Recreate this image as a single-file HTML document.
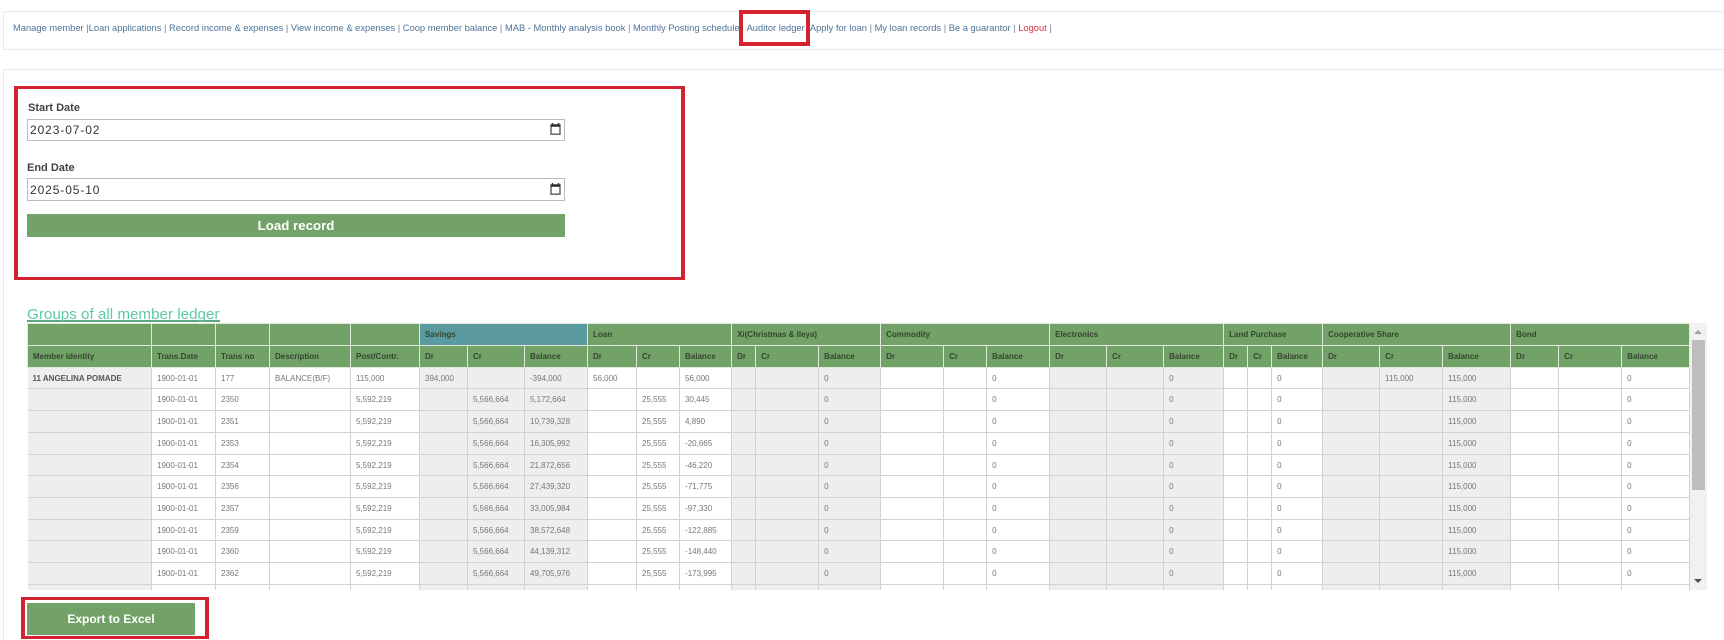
<!DOCTYPE html>
<html lang="en">
<head>
<meta charset="utf-8">
<title>Auditor ledger</title>
<style>
html,body{margin:0;padding:0;background:#fff;width:1724px;height:640px;overflow:hidden;font-family:"Liberation Sans",Arial,sans-serif}
body{position:relative}
.abs{position:absolute;box-sizing:border-box}
.panel1{left:3px;top:11px;width:1721px;height:39px;border:1px solid #eaeaea;border-right:0}
.panel2{left:3px;top:69px;width:1721px;height:571px;border:1px solid #eaeaea;border-right:0;border-bottom:0}
.nav{left:13px;top:22px;font-size:9.35px;line-height:12px;color:#6d7f96;white-space:pre}
.nav a{color:#4f7299;text-decoration:none}
.nav a.out{color:#d8353c}
.red{border-style:solid;border-color:#d2232f;border-width:3px 4px}
label{position:absolute;left:28px;font-size:11px;font-weight:bold;color:#444;line-height:14px}
input{position:absolute;left:27px;width:538px;height:22px;box-sizing:border-box;border:1px solid #bbb;background:#fff;padding:0 2px;margin:0;font-family:"Liberation Sans",sans-serif;font-size:12px;letter-spacing:.9px;color:#333;border-radius:0;outline:0}
.btn{background:#72a268;color:#fff;font-weight:bold;text-align:center}
.h{left:27px;top:304px;width:193px;height:18px;font-size:15.2px;line-height:21px;color:#5cc9a7;border-bottom:2px solid #62a681;white-space:nowrap}
.wrap{left:27px;top:323px;width:1663px;height:267px;overflow:hidden}
table{border-collapse:collapse;table-layout:fixed;width:1662px;font-size:8px;color:#777}
td,th{border:1px solid #d2d2d2;padding:0 0 0 5px;overflow:hidden;white-space:nowrap;text-align:left;font-weight:normal}
td:first-child{border-left:0}
th{background:#72a268;color:#35452f;font-weight:bold;border-color:#dfe9dc}
th.t{background:#5b9aa0}
col.g{background:#eee}
td.b{font-weight:bold;color:#555}
.sb{left:1690px;top:323px;width:17px;height:267px;background:#f1f1f1}
.th{left:1692px;top:340px;width:13px;height:150px;background:#bdbdbd}
.up{left:1694px;top:330px;width:0;height:0;border-left:4px solid transparent;border-right:4px solid transparent;border-bottom:4px solid #a3a3a3}
.dn{left:1694px;top:579px;width:0;height:0;border-left:4px solid transparent;border-right:4px solid transparent;border-top:4px solid #505050}
svg.cal{position:absolute;left:550px;width:11px;height:12px}
</style>
</head>
<body>
<div class="abs panel1"></div>
<div class="abs panel2"></div>
<div class="abs nav"><a href="#">Manage member</a> |<a href="#">Loan applications</a> | <a href="#">Record income &amp; expenses</a> | <a href="#">View income &amp; expenses</a> | <a href="#">Coop member balance</a> | <a href="#">MAB - Monthly analysis book</a> | <a href="#">Monthly Posting schedule</a>| <a href="#" style="margin-left:2px;margin-right:-2px">Auditor ledger</a> | <a href="#">Apply for loan</a> | <a href="#">My loan records</a> | <a href="#">Be a guarantor</a> | <a class="out" href="#">Logout</a> |</div>
<div class="abs red" style="left:739px;top:10px;width:71px;height:36px;border-width:4px"></div>

<div class="abs red" style="left:14px;top:86px;width:671px;height:194px"></div>
<label style="top:101px">Start Date</label>
<input type="text" value="2023-07-02" style="top:119px">
<svg class="cal" style="top:123px" viewBox="0 0 11 12"><path d="M2.5 0v2M8.5 0v2" stroke="#333" stroke-width="1.4"/><rect x="1" y="2" width="9" height="9.2" fill="#fff" stroke="#666" stroke-width="1.5"/><rect x="1" y="1.5" width="9" height="2.2" fill="#222"/></svg>
<label style="left:27px;top:161px">End Date</label>
<input type="text" value="2025-05-10" style="top:178px;height:23px">
<svg class="cal" style="top:183px" viewBox="0 0 11 12"><path d="M2.5 0v2M8.5 0v2" stroke="#333" stroke-width="1.4"/><rect x="1" y="2" width="9" height="9.2" fill="#fff" stroke="#666" stroke-width="1.5"/><rect x="1" y="1.5" width="9" height="2.2" fill="#222"/></svg>
<div class="abs btn" style="left:27px;top:214px;width:538px;height:23px;font-size:13.3px;line-height:23px">Load record</div>

<div class="abs h">Groups of all member ledger</div>

<div class="abs wrap">
<table>
<colgroup>
<col class="g" style="width:124px"><col style="width:64px"><col style="width:54px"><col style="width:81px"><col style="width:69px">
<col class="g" style="width:48px"><col class="g" style="width:57px"><col class="g" style="width:63px">
<col style="width:49px"><col style="width:43px"><col style="width:52px">
<col class="g" style="width:24px"><col class="g" style="width:63px"><col class="g" style="width:62px">
<col style="width:63px"><col style="width:43px"><col style="width:63px">
<col class="g" style="width:57px"><col class="g" style="width:57px"><col class="g" style="width:60px">
<col style="width:24px"><col style="width:24px"><col style="width:51px">
<col class="g" style="width:57px"><col class="g" style="width:63px"><col class="g" style="width:68px">
<col style="width:48px"><col style="width:63px"><col style="width:68px">
</colgroup>
<tr style="height:22px"><th></th><th></th><th></th><th></th><th></th><th class="t" colspan="3">Savings</th><th colspan="3">Loan</th><th colspan="3">Xi(Christmas &amp; Ileya)</th><th colspan="3">Commodity</th><th colspan="3">Electronics</th><th colspan="3">Land Purchase</th><th colspan="3">Cooperative Share</th><th colspan="3">Bond</th></tr>
<tr style="height:22px"><th>Member Identity</th><th>Trans.Date</th><th>Trans no</th><th>Description</th><th>Post/Contr.</th><th>Dr</th><th>Cr</th><th>Balance</th><th>Dr</th><th>Cr</th><th>Balance</th><th>Dr</th><th>Cr</th><th>Balance</th><th>Dr</th><th>Cr</th><th>Balance</th><th>Dr</th><th>Cr</th><th>Balance</th><th>Dr</th><th>Cr</th><th>Balance</th><th>Dr</th><th>Cr</th><th>Balance</th><th>Dr</th><th>Cr</th><th>Balance</th></tr>
<tr style="height:21px"><td class="b">11 ANGELINA POMADE</td><td>1900-01-01</td><td>177</td><td>BALANCE(B/F)</td><td>115,000</td><td>394,000</td><td></td><td>-394,000</td><td>56,000</td><td></td><td>56,000</td><td></td><td></td><td>0</td><td></td><td></td><td>0</td><td></td><td></td><td>0</td><td></td><td></td><td>0</td><td></td><td>115,000</td><td>115,000</td><td></td><td></td><td>0</td></tr>
<tr style="height:22px"><td></td><td>1900-01-01</td><td>2350</td><td></td><td>5,592,219</td><td></td><td>5,566,664</td><td>5,172,664</td><td></td><td>25,555</td><td>30,445</td><td></td><td></td><td>0</td><td></td><td></td><td>0</td><td></td><td></td><td>0</td><td></td><td></td><td>0</td><td></td><td></td><td>115,000</td><td></td><td></td><td>0</td></tr>
<tr style="height:22px"><td></td><td>1900-01-01</td><td>2351</td><td></td><td>5,592,219</td><td></td><td>5,566,664</td><td>10,739,328</td><td></td><td>25,555</td><td>4,890</td><td></td><td></td><td>0</td><td></td><td></td><td>0</td><td></td><td></td><td>0</td><td></td><td></td><td>0</td><td></td><td></td><td>115,000</td><td></td><td></td><td>0</td></tr>
<tr style="height:22px"><td></td><td>1900-01-01</td><td>2353</td><td></td><td>5,592,219</td><td></td><td>5,566,664</td><td>16,305,992</td><td></td><td>25,555</td><td>-20,665</td><td></td><td></td><td>0</td><td></td><td></td><td>0</td><td></td><td></td><td>0</td><td></td><td></td><td>0</td><td></td><td></td><td>115,000</td><td></td><td></td><td>0</td></tr>
<tr style="height:21px"><td></td><td>1900-01-01</td><td>2354</td><td></td><td>5,592,219</td><td></td><td>5,566,664</td><td>21,872,656</td><td></td><td>25,555</td><td>-46,220</td><td></td><td></td><td>0</td><td></td><td></td><td>0</td><td></td><td></td><td>0</td><td></td><td></td><td>0</td><td></td><td></td><td>115,000</td><td></td><td></td><td>0</td></tr>
<tr style="height:22px"><td></td><td>1900-01-01</td><td>2356</td><td></td><td>5,592,219</td><td></td><td>5,566,664</td><td>27,439,320</td><td></td><td>25,555</td><td>-71,775</td><td></td><td></td><td>0</td><td></td><td></td><td>0</td><td></td><td></td><td>0</td><td></td><td></td><td>0</td><td></td><td></td><td>115,000</td><td></td><td></td><td>0</td></tr>
<tr style="height:22px"><td></td><td>1900-01-01</td><td>2357</td><td></td><td>5,592,219</td><td></td><td>5,566,664</td><td>33,005,984</td><td></td><td>25,555</td><td>-97,330</td><td></td><td></td><td>0</td><td></td><td></td><td>0</td><td></td><td></td><td>0</td><td></td><td></td><td>0</td><td></td><td></td><td>115,000</td><td></td><td></td><td>0</td></tr>
<tr style="height:21px"><td></td><td>1900-01-01</td><td>2359</td><td></td><td>5,592,219</td><td></td><td>5,566,664</td><td>38,572,648</td><td></td><td>25,555</td><td>-122,885</td><td></td><td></td><td>0</td><td></td><td></td><td>0</td><td></td><td></td><td>0</td><td></td><td></td><td>0</td><td></td><td></td><td>115,000</td><td></td><td></td><td>0</td></tr>
<tr style="height:22px"><td></td><td>1900-01-01</td><td>2360</td><td></td><td>5,592,219</td><td></td><td>5,566,664</td><td>44,139,312</td><td></td><td>25,555</td><td>-148,440</td><td></td><td></td><td>0</td><td></td><td></td><td>0</td><td></td><td></td><td>0</td><td></td><td></td><td>0</td><td></td><td></td><td>115,000</td><td></td><td></td><td>0</td></tr>
<tr style="height:22px"><td></td><td>1900-01-01</td><td>2362</td><td></td><td>5,592,219</td><td></td><td>5,566,664</td><td>49,705,976</td><td></td><td>25,555</td><td>-173,995</td><td></td><td></td><td>0</td><td></td><td></td><td>0</td><td></td><td></td><td>0</td><td></td><td></td><td>0</td><td></td><td></td><td>115,000</td><td></td><td></td><td>0</td></tr>
<tr style="height:22px"><td></td><td></td><td></td><td></td><td></td><td></td><td></td><td></td><td></td><td></td><td></td><td></td><td></td><td></td><td></td><td></td><td></td><td></td><td></td><td></td><td></td><td></td><td></td><td></td><td></td><td></td><td></td><td></td><td></td></tr>
</table>
</div>
<div class="abs sb"></div>
<div class="abs th"></div>
<div class="abs up"></div>
<div class="abs dn"></div>

<div class="abs red" style="left:21px;top:597px;width:188px;height:42px"></div>
<div class="abs btn" style="left:27px;top:603px;width:168px;height:32px;font-size:12px;line-height:32px">Export to Excel</div>
</body>
</html>
